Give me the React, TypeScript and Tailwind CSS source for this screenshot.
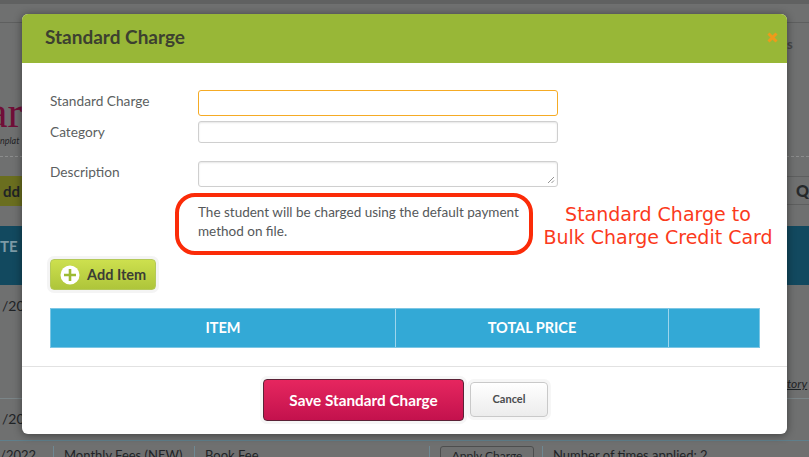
const bodyFont = 'font-["Lato",sans-serif]';

function BackgroundPage() {
  return (
    <div className='h-[457px] w-full overflow-hidden bg-[#6f7070] font-["Lato",sans-serif] text-[#1f2326]'>
      <div className="h-[4px] bg-[#606161]" />
      <div className="flex h-[19px] border-b border-[#5e5f5f]" />
      <div className="flex h-[134px] border-b border-dashed border-[#8c8d8d]">
        <div className="w-[22px] overflow-hidden pt-[68px]">
          <div className='-ml-[12px] font-["Liberation_Serif",serif] text-[44px] leading-[44px] text-[#700f38]'>ar</div>
          <div className="mt-[1px] whitespace-nowrap text-[9px] italic leading-[10px]">nplat</div>
        </div>
        <div className="flex-1" />
        <div className="w-[22px] pt-[12px] text-[13px] font-bold text-[#474848]">s</div>
      </div>
      <div className="flex h-[49px] items-start justify-between pt-[19px]">
        <div className="flex h-[30px] w-[22px] items-center overflow-hidden bg-[#6a6e1f] pl-[3px] text-[15px] font-bold">
          <span>dd</span>
        </div>
        <div className="flex h-[29px] w-[22px] items-center border-y border-[#5e5f5f] pl-[9px] text-[16px] font-black text-[#26292b]">
          Q
        </div>
      </div>
      <div className="mt-[20px] flex h-[59px] items-start justify-between bg-[#12495f] pt-[9px] text-[15px] font-bold text-[#7d9aa6]">
        <span className="w-[22px] overflow-hidden">TE</span>
      </div>
      <div className="flex h-[114px] justify-between border-b border-[#7b8588] pl-[2px] pt-[10px] text-[14px]">
        <span>/20</span>
        <span className="w-[22px] self-end overflow-hidden whitespace-nowrap pb-[5px] text-[12px] italic underline">tory</span>
      </div>
      <div className="flex h-[42px] items-start justify-between border-b border-[#5f7f8c] pl-[2px] pt-[9px] text-[14px]">
        <span>/20</span>
      </div>
      <div className="flex h-[16px] pt-[5px] text-[13px] leading-[18px]">
        <div className="w-[54px] border-r border-[#6f8892]">/2022</div>
        <div className="w-[141px] border-r border-[#6f8892] pl-[10px]">Monthly Fees (NEW)</div>
        <div className="w-[235px] border-r border-[#6f8892] pl-[10px]">Book Fee</div>
        <div className="w-[113px] border-r border-[#6f8892] pl-[10px]">
          <span className="block h-[20px] w-[94px] rounded-[3px] border border-[#4d4e4e] text-center text-[12px]">Apply Charge</span>
        </div>
        <div className="pl-[10px]">Number of times applied: 2</div>
      </div>
    </div>
  );
}

function Field({ label, className, children }: { label: string; className: string; children?: React.ReactNode }) {
  return (
    <div className={`flex ${className}`}>
      <label className="w-[148px] pt-[2px] text-[13.7px] leading-[18px] text-[#5c5f61]">{label}</label>
      {children}
    </div>
  );
}

function StandardChargeModal() {
  return (
    <div className={`absolute left-[22px] top-[14px] h-[420px] w-[765px] overflow-hidden rounded-[6px] bg-white shadow-[0_1px_8px_rgba(0,0,0,0.45)] ${bodyFont}`}>
      <div className="flex h-[49px] items-center justify-between bg-[#98b737] pb-[3px] pl-[23px] pr-[9px]">
        <h2 className="text-[19px] font-bold leading-[24px] text-[#3c4030]">Standard Charge</h2>
        <svg width="11" height="11" viewBox="0 0 11 11" className="mt-[1px]">
          <path d="M1.5 1.5 L9.5 9.5 M9.5 1.5 L1.5 9.5" stroke="#ef9a1a" strokeWidth="3" />
        </svg>
      </div>

      <div className="pl-[28px] pt-[27px]">
        <Field label="Standard Charge" className="h-[26px]">
          <div className="h-[26px] w-[360px] rounded-[3px] border border-[#f5ab25] bg-white" />
        </Field>
        <Field label="Category" className="mt-[5px] h-[22px]">
          <div className="h-[22px] w-[360px] rounded-[3px] border border-[#cfcfcf] bg-white shadow-[inset_0_1px_2px_rgba(0,0,0,0.1)]" />
        </Field>
        <Field label="Description" className="mt-[18px] h-[26px]">
          <div className="relative h-[26px] w-[360px] rounded-[3px] border border-[#cfcfcf] bg-white shadow-[inset_0_1px_2px_rgba(0,0,0,0.1)]">
            <svg width="8" height="8" viewBox="0 0 8 8" className="absolute bottom-[2px] right-[2px]">
              <path d="M1 7 L7 1 M4.5 7 L7 4.5" stroke="#777" strokeWidth="0.8" />
            </svg>
          </div>
        </Field>

        <div className="mt-[6px] flex h-[62px]">
          <div className="ml-[125px] h-[62px] w-[358px] rounded-[20px] border-[4px] border-[#fb2b08] pl-[19px] pt-[6px] text-[13.5px] leading-[19px] text-[#55585a]">
            The student will be charged using the default payment
            <br />
            method on file.
          </div>
          <div className='ml-[10px] w-[230px] whitespace-nowrap pt-[10px] text-center font-["DejaVu_Sans",sans-serif] text-[19px] leading-[23px] text-[#fb3a1c]'>
            Standard Charge to
            <br />
            Bulk Charge Credit Card
          </div>
        </div>

        <button
          type="button"
          className="mt-[4px] flex h-[31px] w-[106px] items-center rounded-[4px] border border-[#b4c95a] bg-linear-to-b from-[#cde04e] to-[#aec53a] pl-[9px] text-[14.5px] font-bold text-[#3b3d35] shadow-[0_0_0_3px_#f4f4f4]"
        >
          <svg width="20" height="20" viewBox="0 0 20 20" className="mr-[7px]">
            <circle cx="10" cy="10" r="9.5" fill="#fff" />
            <path d="M10 4 V16 M4 10 H16" stroke="#9dbb33" strokeWidth="2.6" />
          </svg>
          Add Item
        </button>

        <div className="mt-[18px] flex h-[40px] w-[710px] border border-[#7cc6e4] bg-[#33a9d6] text-[14.5px] font-bold text-white">
          <div className="flex w-[345px] items-center justify-center border-r border-[#9dd5ec]">ITEM</div>
          <div className="flex w-[273px] items-center justify-center border-r border-[#9dd5ec]">TOTAL PRICE</div>
          <div className="flex-1" />
        </div>
      </div>

      <div className="mt-[18px] flex h-[68px] justify-center gap-[6px] border-t border-[#e2e2e2] pl-[2px] pt-[12px]">
        <button
          type="button"
          className="h-[42px] w-[201px] rounded-[4px] border border-[#5b2236] bg-linear-to-b from-[#e6265f] to-[#c3114d] text-[15.3px] font-bold text-white shadow-[0_0_0_3px_#f6f6f6]"
        >
          Save Standard Charge
        </button>
        <button
          type="button"
          className="mt-[3px] h-[35px] w-[78px] rounded-[4px] border border-[#c9c9c9] bg-linear-to-b from-[#ffffff] to-[#ececec] text-[11px] font-bold text-[#4a4c4e] shadow-[0_0_0_3px_#f6f6f6]"
        >
          Cancel
        </button>
      </div>
    </div>
  );
}

export default function App() {
  return (
    <div className="relative h-[457px] w-[809px] overflow-hidden">
      <BackgroundPage />
      <StandardChargeModal />
    </div>
  );
}
